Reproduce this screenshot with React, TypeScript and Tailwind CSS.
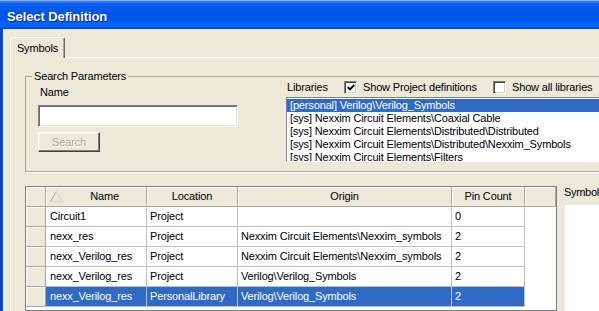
import React from 'react';

type Row = { name: string; location: string; origin: string; pins: string; selected?: boolean };

const rows: Row[] = [
  { name: 'Circuit1', location: 'Project', origin: '', pins: '0' },
  { name: 'nexx_res', location: 'Project', origin: 'Nexxim Circuit Elements\\Nexxim_symbols', pins: '2' },
  { name: 'nexx_Verilog_res', location: 'Project', origin: 'Nexxim Circuit Elements\\Nexxim_symbols', pins: '2' },
  { name: 'nexx_Verilog_res', location: 'Project', origin: 'Verilog\\Verilog_Symbols', pins: '2' },
  { name: 'nexx_Verilog_res', location: 'PersonalLibrary', origin: 'Verilog\\Verilog_Symbols', pins: '2', selected: true },
];

const libraries = [
  '[personal] Verilog\\Verilog_Symbols',
  '[sys] Nexxim Circuit Elements\\Coaxial Cable',
  '[sys] Nexxim Circuit Elements\\Distributed\\Distributed',
  '[sys] Nexxim Circuit Elements\\Distributed\\Nexxim_Symbols',
  '[sys] Nexxim Circuit Elements\\Filters',
];

const raised = 'border-b border-r border-[#ACA899] bg-[#ECE9D8] shadow-[inset_1px_1px_0_#fff]';

function CheckBox({ checked }: { checked?: boolean }) {
  return (
    <span className="flex h-[13px] w-[13px] shrink-0 items-center justify-center border border-b-white border-l-[#808080] border-r-white border-t-[#808080] bg-white shadow-[inset_1px_1px_0_#404040,inset_-1px_-1px_0_#D4D0C8]">
      {checked && (
        <svg width="8" height="7" viewBox="0 0 8 7">
          <path d="M0.8 3 L3 5.3 L7.2 1" fill="none" stroke="#000" strokeWidth="1.9" />
        </svg>
      )}
    </span>
  );
}

function SortGlyph() {
  return (
    <svg width="13" height="11" viewBox="0 0 13 11" className="ml-[4px] mt-[4px] shrink-0">
      <path d="M0.5 10.5 L6.5 0.5" stroke="#A7A492" fill="none" />
      <path d="M6.5 0.5 L12.5 10.5 L0.5 10.5" stroke="#D8D5C6" fill="none" />
    </svg>
  );
}

function App() {
  return (
    <div className="flex h-[311px] w-[599px] flex-col overflow-hidden bg-[#ECE9D8] font-['Liberation_Sans',Arial,sans-serif] text-[11px] leading-[13px] tracking-[-0.15px] text-black">
      <div className="h-px shrink-0 bg-[#9DA9C2]" />
      <div className="flex h-[28px] shrink-0 items-center bg-[linear-gradient(180deg,#3D8BFF_0%,#0A5EF0_10%,#0055E5_50%,#0058EA_65%,#0066FF_80%,#0062F8_92%,#0040D0_100%)] pl-[7px] pt-[3px]">
        <span className="text-[13px] font-bold tracking-[-0.1px] text-white [text-shadow:1px_1px_0_#0A1883]">
          Select Definition
        </span>
      </div>

      <div className="flex min-h-0 flex-1">
        <div className="w-[3px] shrink-0 bg-[#0846D8]" />
        <div className="flex flex-1 flex-col pl-[7px] pt-[8px]">
          <div className="flex">
            <div className="relative z-10 -mb-px flex h-[21px] w-[55px] items-center justify-center rounded-t-[2px] border-l border-r border-t border-l-white border-r-[#716F64] border-t-white bg-[#ECE9D8] shadow-[inset_-1px_0_0_#ACA899]">
              Symbols
            </div>
          </div>

          <div className="flex flex-1 flex-col border-l border-t border-white pl-[14px] pt-[12px]">
            <fieldset className="h-[102px] w-[640px] shrink-0 border border-[#ACA899] shadow-[0_1px_0_#fff]">
              <legend className="ml-[6px] px-[2px]">Search Parameters</legend>
              <div className="flex">
                <div className="flex w-[260px] shrink-0 flex-col pl-[12px]">
                  <span className="mt-[3px] pl-[2px]">Name</span>
                  <div className="mt-[6px] h-[22px] w-[200px] border border-b-white border-l-[#808080] border-r-white border-t-[#808080] bg-white shadow-[inset_1px_1px_0_#716F64,inset_-1px_-1px_0_#E4E1D5]" />
                  <div className="mt-[5px] flex h-[20px] w-[62px] items-center justify-center border border-b-[#404040] border-l-white border-r-[#404040] border-t-white shadow-[inset_-1px_-1px_0_#808080,inset_1px_1px_0_#F4F2EA] text-[#ACA899] [text-shadow:1px_1px_0_#fff]">
                    Search
                  </div>
                </div>

                <div className="-mt-[2px] flex flex-col">
                  <div className="flex h-[13px] items-center">
                    <span className="w-[58px] pl-[1px]">Libraries</span>
                    <div className="flex w-[149px] items-center gap-[6px]">
                      <CheckBox checked />
                      <span>Show Project definitions</span>
                    </div>
                    <div className="flex items-center gap-[6px]">
                      <CheckBox />
                      <span className="whitespace-nowrap">Show all libraries</span>
                    </div>
                  </div>
                  <div className="mt-[3px] flex h-[65px] w-[330px] flex-col overflow-hidden border border-b-white border-l-[#808080] border-r-white border-t-[#808080] bg-white pt-px">
                    {libraries.map((lib, i) => (
                      <div
                        key={lib}
                        className={`h-[13px] shrink-0 whitespace-nowrap pl-[3px] ${i === 0 ? 'bg-[#316AC5] text-white' : ''}`}
                      >
                        {lib}
                      </div>
                    ))}
                  </div>
                </div>
              </div>
            </fieldset>

            <div className="mt-[14px] flex flex-1 gap-[7px]">
              <div className="flex w-[532px] shrink-0 flex-col border border-[#808080] bg-white">
                <div className="flex h-[20px] shrink-0">
                  <div className={`w-[20px] ${raised}`} />
                  <div className={`flex w-[101px] ${raised}`}>
                    <SortGlyph />
                    <span className="flex-1 self-center text-center">Name</span>
                  </div>
                  <div className={`flex w-[91px] items-center justify-center ${raised}`}>Location</div>
                  <div className={`flex w-[214px] items-center justify-center ${raised}`}>Origin</div>
                  <div className={`flex w-[73px] items-center justify-center ${raised}`}>Pin Count</div>
                  <div className={`w-[31px] ${raised}`} />
                </div>

                {rows.map((r, i) => {
                  const cell = `flex items-center whitespace-nowrap border-b border-r border-[#C0C0C0] pl-[3px] ${
                    r.selected ? 'bg-[#316AC5] text-white' : 'bg-white'
                  }`;
                  return (
                    <div key={i} className="flex h-[20px] shrink-0">
                      <div className={`w-[20px] ${raised}`} />
                      <div className={`w-[101px] pl-[4px] ${cell}`}>{r.name}</div>
                      <div className={`w-[91px] ${cell}`}>{r.location}</div>
                      <div className={`w-[214px] ${cell}`}>{r.origin}</div>
                      <div className={`w-[73px] ${cell}`}>{r.pins}</div>
                    </div>
                  );
                })}
              </div>

              <div className="flex flex-1 flex-col">
                <span className="whitespace-nowrap tracking-[-0.3px]">Symbol</span>
                <div className="ml-px mt-[6px] flex-1 bg-white" />
              </div>
            </div>
          </div>
        </div>
      </div>
    </div>
  );
}

export default App;
